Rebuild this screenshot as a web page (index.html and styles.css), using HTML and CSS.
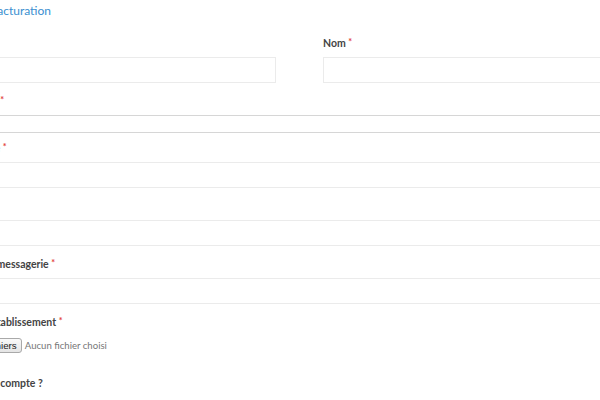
FILE: index.html
```html
<!DOCTYPE html>
<html lang="fr">
<head>
  <meta charset="UTF-8" />
  <meta name="viewport" content="width=device-width, initial-scale=1.0"/>
  <title>Adresse de facturation</title>
  <link rel="stylesheet" href="styles.css">
</head>
<body>

  <form class="billing">
    <h4 class="title">Adresse de facturation</h4>

    <div class="row">
      <div class="field">
        <label>Prénom <span class="req">*</span></label>
        <input type="text">
      </div>
      <div class="field">
        <label>Nom <span class="req">*</span></label>
        <input type="text">
      </div>
    </div>

    <div class="field short">
      <label>Raison sociale <span class="req">*</span></label>
      <input type="text" class="thin">
    </div>

    <div class="field">
      <label>Numéro et rue <span class="req">*</span></label>
      <input type="text">
    </div>

    <div class="field">
      <label>Complément</label>
      <input type="text">
    </div>

    <div class="field">
      <label>Adresse de la messagerie <span class="req">*</span></label>
      <input type="email">
    </div>

    <div class="field file-field">
      <label>Justificatif d'établissement <span class="req">*</span></label>
      <div class="file">
        <span class="file-btn">Choisir des fichiers</span>
        <span class="file-name">Aucun fichier choisi</span>
      </div>
    </div>

    <div class="field">
      <label>Créer aussi un compte ?</label>
    </div>
  </form>

</body>
</html>
```

FILE: styles.css
```css
body {
  margin: 0;
  padding-top: 3px;
  font-family: Lato, "Open Sans", sans-serif;
  background: #fff;
  overflow: hidden;
}
.billing {
  width: 735px;
  margin-left: -68px;
}
.title {
  margin: 0 0 16px;
  font-size: 12px;
  line-height: 16px;
  font-weight: normal;
  color: #3a8fd0;
}
.row {
  display: grid;
  grid-template-columns: 1fr 1fr;
  column-gap: 47px;
}
.field {
  margin-bottom: 10px;
}
.field.short {
  margin-bottom: 7px;
}
.field label {
  display: block;
  height: 16px;
  margin-bottom: 6px;
  font-size: 10.5px;
  line-height: 16px;
  font-weight: bold;
  color: #444;
  white-space: nowrap;
}
.req {
  color: #e2413a;
  font-size: 9px;
  line-height: 0;
  vertical-align: 2px;
}
.field input {
  display: block;
  box-sizing: border-box;
  width: 100%;
  height: 26px;
  border: 1px solid #ebebeb;
  background: #fff;
}
.field input.thin {
  height: 18px;
  margin-top: 3px;
  border-color: #d6d6d6;
}
.file-field {
  margin-bottom: 21px;
}
.file {
  display: flex;
  align-items: center;
  gap: 3px;
  height: 18px;
}
.file-btn {
  padding: 0 4px 0 1px;
  border: 1px solid #a9a9a9;
  border-radius: 3px;
  background: linear-gradient(#fafafa, #e4e4e4);
  font-family: "Liberation Sans", Arial, sans-serif;
  font-size: 9.8px;
  line-height: 13px;
  color: #222;
  white-space: nowrap;
}
.file-name {
  font-size: 9.6px;
  color: #777;
  white-space: nowrap;
}
```
